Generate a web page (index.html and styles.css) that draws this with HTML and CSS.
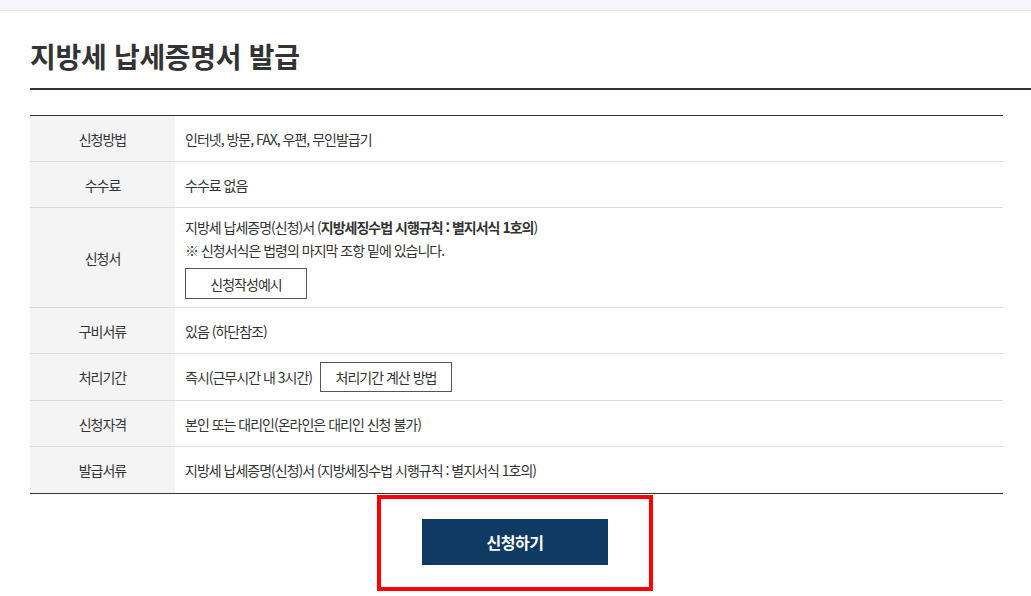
FILE: index.html
```html
<!DOCTYPE html>
<html lang="ko">
<head>
<meta charset="utf-8">
<title>지방세 납세증명서 발급</title>
<link rel="stylesheet" href="styles.css">
</head>
<body>
<div class="topbar"></div>
<div class="content">
  <div class="title-wrap">
    <h1 class="title">지방세 납세증명서 발급</h1>
  </div>
  <table class="info">
    <tbody>
      <tr>
        <th>신청방법</th>
        <td>인터넷, 방문, FAX, 우편, 무인발급기</td>
      </tr>
      <tr>
        <th>수수료</th>
        <td>수수료 없음</td>
      </tr>
      <tr class="tall">
        <th>신청서</th>
        <td>
          <div class="line">지방세 납세증명(신청)서 (<strong>지방세징수법 시행규칙 : 별지서식 1호의</strong>)</div>
          <div class="line">※ 신청서식은 법령의 마지막 조항 밑에 있습니다.</div>
          <span class="outline-btn btn-sample">신청작성예시</span>
        </td>
      </tr>
      <tr>
        <th>구비서류</th>
        <td>있음 (하단참조)</td>
      </tr>
      <tr class="mid">
        <th>처리기간</th>
        <td><span class="inline-row"><span>즉시(근무시간 내 3시간)</span><span class="outline-btn btn-calc">처리기간 계산 방법</span></span></td>
      </tr>
      <tr>
        <th>신청자격</th>
        <td>본인 또는 대리인(온라인은 대리인 신청 불가)</td>
      </tr>
      <tr class="last">
        <th>발급서류</th>
        <td>지방세 납세증명(신청)서 (지방세징수법 시행규칙 : 별지서식 1호의)</td>
      </tr>
    </tbody>
  </table>
  <div class="actions">
    <div class="highlight">
      <span class="submit">신청하기</span>
    </div>
  </div>
</div>
</body>
</html>
```
FILE: styles.css
```css
* { box-sizing: border-box; }
html, body {
  margin: 0;
  padding: 0;
  background: #fff;
  font-family: "Noto Sans CJK KR", "Noto Sans", sans-serif;
  color: #333;
  overflow: hidden;
}
.topbar {
  height: 11px;
  background: #f5f6fa;
  border-bottom: 1px solid #e6e8ee;
}
.content {
  padding-left: 30px;
}
.title-wrap {
  border-bottom: 2px solid #333;
  padding-top: 25px;
  height: 79px;
}
.title {
  margin: 0;
  font-size: 28px;
  line-height: 40px;
  font-weight: 700;
  letter-spacing: -0.3px;
  color: #333;
}
.info {
  margin-top: 25px;
  width: 973px;
  border-collapse: collapse;
  border-top: 1px solid #333;
  font-size: 14px;
  letter-spacing: -1px;
}
.info th,
.info td {
  height: 46px;
  border-bottom: 1px solid #dcdcdc;
  padding: 0 10px;
  vertical-align: middle;
  text-align: left;
  color: #333;
}
.info th {
  width: 145px;
  background: #f4f4f4;
  font-weight: 400;
  text-align: center;
}
.info tr.tall th,
.info tr.tall td { height: 100px; }
.info tr.tall td { padding: 8px 10px; }
.info tr.mid th,
.info tr.mid td { height: 47px; }
.info tr.last th,
.info tr.last td {
  height: 47px;
  border-bottom: 1px solid #333;
}
.info strong { font-weight: 700; }
.line { line-height: 23px; }
.outline-btn {
  display: inline-flex;
  align-items: center;
  justify-content: center;
  border: 1px solid #555;
  background: #fff;
  color: #333;
  font-size: 14px;
}
.btn-sample {
  width: 122px;
  height: 31px;
  margin-top: 6px;
}
.inline-row {
  display: inline-flex;
  align-items: center;
  gap: 8px;
}
.btn-calc {
  width: 132px;
  height: 30px;
}
.actions {
  width: 970px;
  display: flex;
  justify-content: center;
  padding-top: 1px;
}
.highlight {
  border: 4px solid #ff0000;
  padding: 20px 41px 22px;
}
.submit {
  display: flex;
  align-items: center;
  justify-content: center;
  width: 186px;
  height: 46px;
  background: #0f3a62;
  color: #fff;
  font-size: 16px;
  font-weight: 700;
  letter-spacing: -0.5px;
}
```
